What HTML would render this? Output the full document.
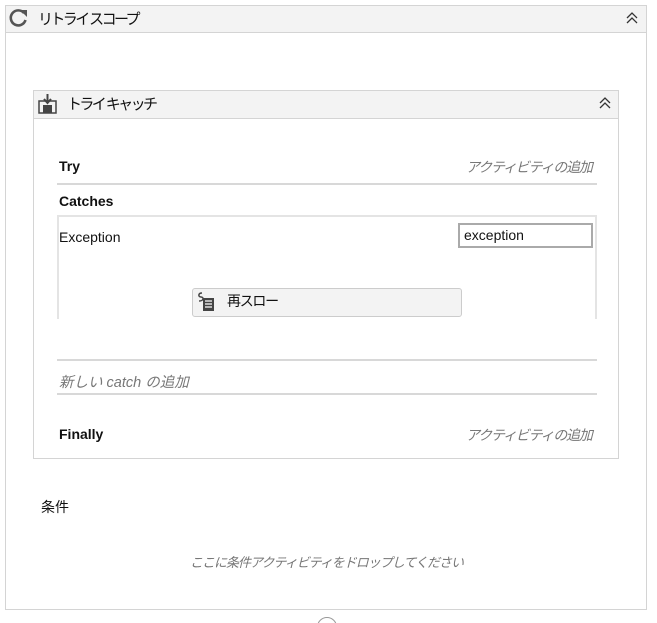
<!DOCTYPE html><html><head><meta charset="utf-8"><style>
html,body{margin:0;width:657px;height:623px;overflow:hidden}
body{background:#fff;position:relative;font-family:"Liberation Sans","Noto Sans CJK JP",sans-serif;font-size:14px;color:#111}
.a{position:absolute}
.box{border:1px solid #d4d4d4;box-sizing:border-box}
.hdr{background:#f3f3f3;border-bottom:1px solid #d4d4d4;box-sizing:border-box}
.it{font-style:italic;color:#777}
.jp{letter-spacing:-1.2px}
.ln{height:2px;background:#d8d8d8}
</style></head><body>
<div class="a box" style="left:5px;top:5px;width:642px;height:605px"></div>
<div class="a hdr" style="left:6px;top:6px;width:640px;height:27px"></div>
<svg class="a" style="left:8px;top:8px" width="22" height="20" viewBox="0 0 22 20"><path d="M16 5 A7.5 7.5 0 1 0 17.5 12" fill="none" stroke="#555" stroke-width="2.6"/><path d="M12 2 L19 2 L19 9 Z" fill="#555"/></svg>
<div class="a" style="left:38px;top:8px;font-size:15px;letter-spacing:-2.6px">リトライ スコープ</div>
<svg class="a" style="left:625px;top:11px" width="14" height="14" viewBox="0 0 14 14"><path d="M2 7 L7 2 L12 7 M2 12 L7 7 L12 12" fill="none" stroke="#333" stroke-width="1.3"/></svg>

<div class="a box" style="left:33px;top:90px;width:586px;height:369px"></div>
<div class="a hdr" style="left:34px;top:91px;width:584px;height:28px"></div>
<svg class="a" style="left:36px;top:93px" width="24" height="22" viewBox="0 0 24 22"><rect x="3" y="8" width="17" height="12" fill="none" stroke="#444" stroke-width="1.5"/><rect x="7" y="12" width="9" height="8" fill="#444"/><path d="M11.5 1 V9 M8 6 L11.5 10 L15 6" fill="none" stroke="#444" stroke-width="2"/></svg>
<div class="a" style="left:67px;top:93px;font-size:15px;letter-spacing:-2.6px">トライ キャッチ</div>
<svg class="a" style="left:598px;top:96px" width="14" height="14" viewBox="0 0 14 14"><path d="M2 7 L7 2 L12 7 M2 12 L7 7 L12 12" fill="none" stroke="#333" stroke-width="1.3"/></svg>

<div class="a" style="left:59px;top:158px;font-weight:bold">Try</div>
<div class="a it jp" style="left:466px;top:157px">アクティビティの追加</div>
<div class="a ln" style="left:57px;top:183px;width:540px"></div>
<div class="a" style="left:59px;top:193px;font-weight:bold">Catches</div>
<div class="a" style="left:57px;top:215px;width:540px;height:104px;border:2px solid #e4e4e4;border-bottom:none;box-sizing:border-box"></div>
<div class="a" style="left:59px;top:229px">Exception</div>
<div class="a" style="left:458px;top:223px;width:135px;height:25px;border:2px solid #aaa;box-sizing:border-box;padding-left:4px;line-height:21px">exception</div>
<div class="a" style="left:192px;top:288px;width:270px;height:29px;background:#f3f3f3;border:1px solid #ccc;border-radius:3px;box-sizing:border-box"></div>
<svg class="a" style="left:196px;top:291px" width="22" height="22" viewBox="0 0 22 22"><rect x="7" y="7" width="11" height="13" fill="#444"/><path d="M9 10h7M9 13h7M9 16h7" stroke="#fff" stroke-width="1.2"/><path d="M6 2 C2 2 2 6 5 6 C8 6 8 10 3 10" fill="none" stroke="#444" stroke-width="1.5"/></svg>
<div class="a" style="left:227px;top:291px;letter-spacing:-1.3px">再スロー</div>
<div class="a ln" style="left:57px;top:359px;width:540px"></div>
<div class="a it" style="left:59px;top:371px;font-size:14.5px">新しい catch の追加</div>
<div class="a ln" style="left:57px;top:393px;width:540px"></div>
<div class="a" style="left:59px;top:426px;font-weight:bold">Finally</div>
<div class="a it jp" style="left:466px;top:425px">アクティビティの追加</div>

<div class="a" style="left:41px;top:497px">条件</div>
<div class="a it" style="left:190px;top:552px;font-size:13px;letter-spacing:-1px;white-space:nowrap">ここに条件アクティビティをドロップしてください</div>
<div class="a" style="left:317px;top:617px;width:18px;height:18px;border:1px solid #999;border-radius:50%"></div>
</body></html>
